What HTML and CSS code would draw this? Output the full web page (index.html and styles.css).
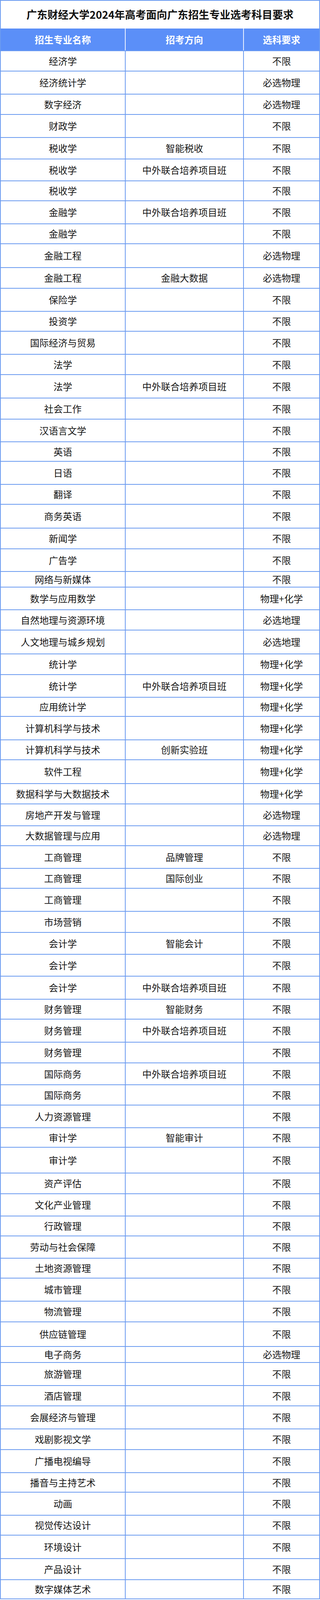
FILE: index.html
```html
<!DOCTYPE html>
<html lang="zh-CN">
<head>
<meta charset="utf-8">
<title>广东财经大学2024年高考面向广东招生专业选考科目要求</title>
<link rel="stylesheet" href="styles.css">
</head>
<body>
<div class="sheet">
  <h1 class="title">广东财经大学2024年高考面向广东招生专业选考科目要求</h1>
  <div class="grid">
    <div class="row head"><div>招生专业名称</div><div>招考方向</div><div>选科要求</div></div>
    <div class="row"><div>经济学</div><div></div><div>不限</div></div>
    <div class="row"><div>经济统计学</div><div></div><div>必选物理</div></div>
    <div class="row"><div>数字经济</div><div></div><div>必选物理</div></div>
    <div class="row"><div>财政学</div><div></div><div>不限</div></div>
    <div class="row"><div>税收学</div><div>智能税收</div><div>不限</div></div>
    <div class="row"><div>税收学</div><div>中外联合培养项目班</div><div>不限</div></div>
    <div class="row"><div>税收学</div><div></div><div>不限</div></div>
    <div class="row"><div>金融学</div><div>中外联合培养项目班</div><div>不限</div></div>
    <div class="row"><div>金融学</div><div></div><div>不限</div></div>
    <div class="row"><div>金融工程</div><div></div><div>必选物理</div></div>
    <div class="row"><div>金融工程</div><div>金融大数据</div><div>必选物理</div></div>
    <div class="row"><div>保险学</div><div></div><div>不限</div></div>
    <div class="row"><div>投资学</div><div></div><div>不限</div></div>
    <div class="row"><div>国际经济与贸易</div><div></div><div>不限</div></div>
    <div class="row"><div>法学</div><div></div><div>不限</div></div>
    <div class="row"><div>法学</div><div>中外联合培养项目班</div><div>不限</div></div>
    <div class="row"><div>社会工作</div><div></div><div>不限</div></div>
    <div class="row"><div>汉语言文学</div><div></div><div>不限</div></div>
    <div class="row"><div>英语</div><div></div><div>不限</div></div>
    <div class="row"><div>日语</div><div></div><div>不限</div></div>
    <div class="row"><div>翻译</div><div></div><div>不限</div></div>
    <div class="row"><div>商务英语</div><div></div><div>不限</div></div>
    <div class="row"><div>新闻学</div><div></div><div>不限</div></div>
    <div class="row"><div>广告学</div><div></div><div>不限</div></div>
    <div class="row"><div>网络与新媒体</div><div></div><div>不限</div></div>
    <div class="row"><div>数学与应用数学</div><div></div><div>物理+化学</div></div>
    <div class="row"><div>自然地理与资源环境</div><div></div><div>必选地理</div></div>
    <div class="row"><div>人文地理与城乡规划</div><div></div><div>必选地理</div></div>
    <div class="row"><div>统计学</div><div></div><div>物理+化学</div></div>
    <div class="row"><div>统计学</div><div>中外联合培养项目班</div><div>物理+化学</div></div>
    <div class="row"><div>应用统计学</div><div></div><div>物理+化学</div></div>
    <div class="row"><div>计算机科学与技术</div><div></div><div>物理+化学</div></div>
    <div class="row"><div>计算机科学与技术</div><div>创新实验班</div><div>物理+化学</div></div>
    <div class="row"><div>软件工程</div><div></div><div>物理+化学</div></div>
    <div class="row"><div>数据科学与大数据技术</div><div></div><div>物理+化学</div></div>
    <div class="row"><div>房地产开发与管理</div><div></div><div>必选物理</div></div>
    <div class="row"><div>大数据管理与应用</div><div></div><div>必选物理</div></div>
    <div class="row"><div>工商管理</div><div>品牌管理</div><div>不限</div></div>
    <div class="row"><div>工商管理</div><div>国际创业</div><div>不限</div></div>
    <div class="row"><div>工商管理</div><div></div><div>不限</div></div>
    <div class="row"><div>市场营销</div><div></div><div>不限</div></div>
    <div class="row"><div>会计学</div><div>智能会计</div><div>不限</div></div>
    <div class="row"><div>会计学</div><div></div><div>不限</div></div>
    <div class="row"><div>会计学</div><div>中外联合培养项目班</div><div>不限</div></div>
    <div class="row"><div>财务管理</div><div>智能财务</div><div>不限</div></div>
    <div class="row"><div>财务管理</div><div>中外联合培养项目班</div><div>不限</div></div>
    <div class="row"><div>财务管理</div><div></div><div>不限</div></div>
    <div class="row"><div>国际商务</div><div>中外联合培养项目班</div><div>不限</div></div>
    <div class="row"><div>国际商务</div><div></div><div>不限</div></div>
    <div class="row"><div>人力资源管理</div><div></div><div>不限</div></div>
    <div class="row"><div>审计学</div><div>智能审计</div><div>不限</div></div>
    <div class="row"><div>审计学</div><div></div><div>不限</div></div>
    <div class="row"><div>资产评估</div><div></div><div>不限</div></div>
    <div class="row"><div>文化产业管理</div><div></div><div>不限</div></div>
    <div class="row"><div>行政管理</div><div></div><div>不限</div></div>
    <div class="row"><div>劳动与社会保障</div><div></div><div>不限</div></div>
    <div class="row"><div>土地资源管理</div><div></div><div>不限</div></div>
    <div class="row"><div>城市管理</div><div></div><div>不限</div></div>
    <div class="row"><div>物流管理</div><div></div><div>不限</div></div>
    <div class="row"><div>供应链管理</div><div></div><div>不限</div></div>
    <div class="row"><div>电子商务</div><div></div><div>必选物理</div></div>
    <div class="row"><div>旅游管理</div><div></div><div>不限</div></div>
    <div class="row"><div>酒店管理</div><div></div><div>不限</div></div>
    <div class="row"><div>会展经济与管理</div><div></div><div>不限</div></div>
    <div class="row"><div>戏剧影视文学</div><div></div><div>不限</div></div>
    <div class="row"><div>广播电视编导</div><div></div><div>不限</div></div>
    <div class="row"><div>播音与主持艺术</div><div></div><div>不限</div></div>
    <div class="row"><div>动画</div><div></div><div>不限</div></div>
    <div class="row"><div>视觉传达设计</div><div></div><div>不限</div></div>
    <div class="row"><div>环境设计</div><div></div><div>不限</div></div>
    <div class="row"><div>产品设计</div><div></div><div>不限</div></div>
    <div class="row"><div>数字媒体艺术</div><div></div><div>不限</div></div>
  </div>
</div>
</body>
</html>
```
FILE: styles.css
```css
html, body {
  margin: 0;
  padding: 0;
  background: #ffffff;
}

body {
  font-family: "Noto Sans CJK SC", "Noto Sans", sans-serif;
  color: #161616;
}

.sheet {
  width: 820px;
  box-sizing: border-box;
  border: 2px solid #6b9bf0;
}

.title {
  margin: 0;
  height: 71px;
  display: flex;
  align-items: center;
  justify-content: center;
  font-size: 27px;
  line-height: 1.2;
  font-weight: 700;
  color: #111111;
}

.grid {
  display: grid;
  grid-template-columns: 318px 303px 195px;
  grid-template-rows:
    56px
    52px 59px 52px 59px 55px 56px 51px 59px 51px 61px
    53px 59px 51px 59px 52px 60px 54px 58px 50px 59px
    51px 61px 53px 58px 40px 58px 52px 61px 53px 58px
    49px 60px 51px 61px 52px 56px 51px 58px 51px 59px
    54px 56px 56px 59px 51px 59px 53px 56px 52px 58px
    50px 66px 53px 57px 51px 57px 51px 59px 53px 63px
    41px 59px 52px 59px 53px 59px 50px 59px 51px 60px
    54px 49px;
}

.row {
  display: contents;
}

.row > div {
  box-sizing: border-box;
  display: flex;
  align-items: center;
  justify-content: center;
  font-size: 24px;
  line-height: 1.2;
  white-space: nowrap;
  border-top: 2px solid #6b9bf0;
}

.row > div + div {
  border-left: 2px solid #6b9bf0;
}

.row.head > div {
  border-top: none;
  background: #5b8ff8;
  color: #ffffff;
  font-weight: 700;
}

.row.head > div + div {
  border-left: 2px solid #eef3ff;
}
```
